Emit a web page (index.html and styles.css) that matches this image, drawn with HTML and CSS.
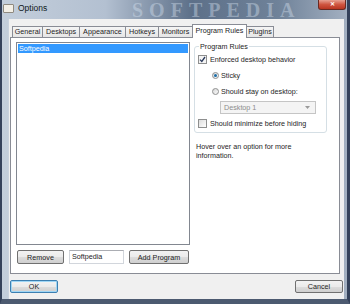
FILE: index.html
```html
<!DOCTYPE html>
<html lang="en">
<head>
  <meta charset="UTF-8">
  <title>Options</title>
  <link rel="stylesheet" href="styles.css">
</head>
<body>

<div class="window">
  <!-- Title bar -->
  <div class="titlebar">
    <span class="app-icon"></span>
    <span class="title">Options</span>
    <span class="watermark">SOFTPEDIA</span>
    <span class="close-btn">&#x2715;</span>
  </div>

  <div class="client">
    <!-- Tabs -->
    <div class="tabs">
      <div class="tab w-general">General</div>
      <div class="tab w-desktops">Desktops</div>
      <div class="tab w-appearance">Appearance</div>
      <div class="tab w-hotkeys">Hotkeys</div>
      <div class="tab w-monitors">Monitors</div>
      <div class="tab active w-rules">Program Rules</div>
      <div class="tab w-plugins">Plugins</div>
    </div>

    <div class="panel">
      <div class="left-col">
        <div class="listbox">
          <div class="list-item selected">Softpedia</div>
        </div>
        <div class="list-actions">
          <button class="btn btn-remove">Remove</button>
          <div class="textbox">Softpedia</div>
          <button class="btn btn-add">Add Program</button>
        </div>
      </div>

      <div class="right-col">
        <fieldset class="groupbox">
          <legend>Program Rules</legend>
          <div class="row">
            <span class="checkbox checked">
              <svg width="7" height="7" viewBox="0 0 7 7"><path d="M1 3.6 L2.8 5.4 L6 1" fill="none" stroke="#2a3a5c" stroke-width="1.3"/></svg>
            </span>
            Enforced desktop behavior
          </div>
          <div class="row indent">
            <span class="radio checked"><span class="dot"></span></span>
            Sticky
          </div>
          <div class="row indent">
            <span class="radio"></span>
            Should stay on desktop:
          </div>
          <div class="combo">
            <span>Desktop 1</span>
            <svg width="5" height="3" viewBox="0 0 5 3"><path d="M0 0 L5 0 L2.5 3 Z" fill="#9a9a9a"/></svg>
          </div>
          <div class="row last">
            <span class="checkbox"></span>
            Should minimize before hiding
          </div>
        </fieldset>
        <p class="hint">Hover over an option for more information.</p>
      </div>
    </div>

    <div class="dialog-buttons">
      <button class="btn btn-default">OK</button>
      <button class="btn">Cancel</button>
    </div>
  </div>
</div>

</body>
</html>
```

FILE: styles.css
```css
body {
  margin: 0;
  font-family: 'Liberation Sans', Arial, sans-serif;
  font-size: 7.2px;
  color: #1e1e1e;
  background: #3a4660;
}
.window {
  width: 350px;
  height: 304px;
  box-sizing: border-box;
  display: flex;
  flex-direction: column;
  background: linear-gradient(to right, #c3cedb 0%, #b3c0d1 30%, #5d7089 55%, #6f8299 80%, #a3b0c1 100%);
  border-left: 2px solid #34415a;
  border-right: 3px solid #34415a;
  border-bottom: 5px solid #4c5a70;
}
.titlebar {
  position: relative;
  height: 19px;
  display: flex;
  align-items: flex-start;
}
.app-icon {
  width: 9px;
  height: 7px;
  margin: 4px 0 0 1px;
  background: #f3efe6;
  border: 1px solid #8f8a80;
  border-radius: 1px;
}
.title {
  margin: 2px 0 0 4px;
  font-size: 8.5px;
  color: #101820;
  line-height: 12px;
}
.watermark {
  position: absolute;
  left: 130px;
  top: 0;
  font-family: 'Liberation Serif', serif;
  font-size: 20px;
  line-height: 21px;
  font-weight: bold;
  letter-spacing: 6px;
  color: rgba(214, 226, 240, 0.42);
}
.close-btn {
  position: absolute;
  left: 316px;
  top: 0;
  width: 28px;
  height: 10px;
  box-sizing: border-box;
  border: 1px solid #6a2a22;
  border-top: none;
  border-radius: 0 0 3px 3px;
  background: linear-gradient(#e7a192, #cf5540 50%, #b83521);
  color: #fff;
  font-size: 6px;
  font-weight: bold;
  line-height: 9px;
  text-align: center;
}
.client {
  flex: 1;
  margin: 0 3px 0 6px;
  background: #f0f0f0;
  border-left: 1px solid #c9d2de;
  display: flex;
  flex-direction: column;
}
.tabs {
  display: flex;
  align-items: flex-end;
  height: 18px;
  padding-left: 3px;
  position: relative;
  z-index: 1;
}
.tab {
  height: 11px;
  line-height: 10px;
  text-align: center;
  box-sizing: border-box;
  border: 1px solid #898c95;
  border-bottom: none;
  border-right: none;
  background: linear-gradient(#f5f5f5, #e6e6e6);
}
.tab.active {
  height: 14px;
  line-height: 12px;
  background: #fff;
  border-right: 1px solid #898c95;
  margin-bottom: -1px;
}
.w-general { width: 30px; }
.w-desktops { width: 37px; }
.w-appearance { width: 46px; }
.w-hotkeys { width: 33px; }
.w-monitors { width: 34px; }
.w-rules { width: 55px; }
.w-plugins { width: 27px; border-left: none; border-right: 1px solid #898c95; }
.panel {
  margin: 0 4px 0 1px;
  height: 237px;
  box-sizing: border-box;
  border: 1px solid #898c95;
  background: #fff;
  padding: 4px 0 0 5px;
  display: flex;
  gap: 4px;
}
.left-col {
  width: 174px;
  display: flex;
  flex-direction: column;
}
.listbox {
  height: 203px;
  box-sizing: border-box;
  border: 1px solid #828790;
  padding: 1px;
}
.list-item {
  height: 9px;
  line-height: 9px;
  padding-left: 1px;
}
.list-item.selected {
  background: #3399ff;
  color: #fff;
}
.list-actions {
  display: flex;
  margin-top: 5px;
  gap: 5px;
  padding-left: 1px;
}
.btn {
  font-family: inherit;
  font-size: 7.2px;
  color: #1e1e1e;
  height: 14px;
  padding: 0;
  box-sizing: border-box;
  border: 1px solid #707070;
  border-radius: 2px;
  background: linear-gradient(#f2f2f2 0%, #ebebeb 50%, #dddddd 51%, #cfcfcf 100%);
}
.btn-remove { width: 47px; }
.btn-add { width: 60px; }
.textbox {
  width: 55px;
  height: 14px;
  box-sizing: border-box;
  border: 1px solid #d2d6dc;
  border-top-color: #abadb3;
  line-height: 12px;
  padding-left: 2px;
}
.right-col {
  width: 133px;
}
.groupbox {
  margin: 0;
  padding: 3px 4px 3px 3px;
  border: 1px solid #d5dfe5;
  border-radius: 3px;
}
.groupbox legend {
  padding: 0 1px;
  margin-left: 1px;
  line-height: 9px;
}
.row {
  display: flex;
  align-items: center;
  height: 11px;
  margin-bottom: 5px;
}
.row.indent {
  padding-left: 14px;
}
.row.last {
  margin-bottom: 0;
}
.checkbox {
  width: 9px;
  height: 9px;
  box-sizing: border-box;
  border: 1px solid #8e8f8f;
  background: linear-gradient(135deg, #dcdcdc, #fff);
  margin-right: 3px;
  display: flex;
  align-items: center;
  justify-content: center;
}
.checkbox.checked {
  background: #f4f4f4;
}
.radio {
  width: 7px;
  height: 7px;
  box-sizing: border-box;
  border: 1px solid #8e8f8f;
  border-radius: 50%;
  background: linear-gradient(135deg, #d8d8d8, #fbfbfb);
  margin-right: 2px;
  display: flex;
  align-items: center;
  justify-content: center;
}
.radio .dot {
  width: 3px;
  height: 3px;
  border-radius: 50%;
  background: #1d6ea8;
}
.combo {
  margin: -1px 0 4px 22px;
  width: 96px;
  height: 13px;
  box-sizing: border-box;
  border: 1px solid #c5c5c5;
  background: #f4f4f4;
  color: #8d8d8d;
  display: flex;
  align-items: center;
  justify-content: space-between;
  padding: 0 5px 0 3px;
}
.hint {
  margin: 9px 0 0 2px;
  line-height: 9px;
  width: 110px;
  color: #1e1e1e;
}
.dialog-buttons {
  display: flex;
  justify-content: space-between;
  margin: 6px 1px 0 1px;
}
.dialog-buttons .btn {
  width: 48px;
  height: 13px;
}
.btn-default {
  border-color: #3c7fb1;
  box-shadow: inset 0 0 0 1px #9fd6f5;
}
```
